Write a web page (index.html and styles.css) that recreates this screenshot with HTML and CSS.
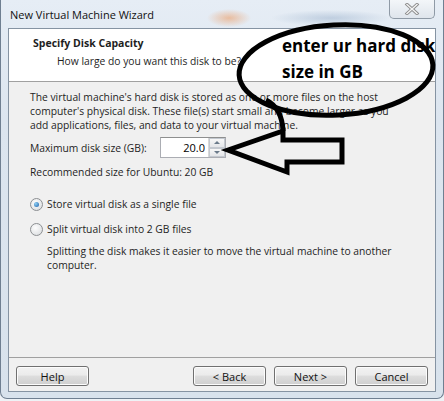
FILE: index.html
```html
<!DOCTYPE html>
<html lang="en">
<head>
  <meta charset="UTF-8" />
  <title>New Virtual Machine Wizard</title>
  <link rel="stylesheet" href="styles.css">
</head>
<body>
  <div class="window">
    <div class="titlebar">
      <span class="title">New Virtual Machine Wizard</span>
      <button class="close" aria-label="Close">
        <svg width="16" height="12" viewBox="0 0 16 12">
          <path d="M3 1.5 L13 10.5 M13 1.5 L3 10.5" stroke="#8a8a8a" stroke-width="3.2" stroke-linecap="square"/>
          <path d="M3 1.5 L13 10.5 M13 1.5 L3 10.5" stroke="#f4f4f4" stroke-width="1.4" stroke-linecap="square"/>
        </svg>
      </button>
    </div>

    <div class="client">
      <div class="header">
        <h3>Specify Disk Capacity</h3>
        <p>How large do you want this disk to be?</p>
      </div>

      <div class="content">
        <p class="intro">The virtual machine's hard disk is stored as one or more files on the host computer's physical disk. These file(s) start small and become larger as you add applications, files, and data to your virtual machine.</p>

        <div class="size-row">
          <label for="size">Maximum disk size (GB):</label>
          <div class="spin">
            <input type="text" id="size" value="20.0" />
            <div class="spin-btns">
              <span class="up"></span>
              <span class="down"></span>
            </div>
          </div>
        </div>

        <p class="recommended">Recommended size for Ubuntu: 20 GB</p>

        <div class="radio first checked"><span class="dot"></span>Store virtual disk as a single file</div>
        <div class="radio"><span class="dot"></span>Split virtual disk into 2 GB files</div>
        <p class="hint">Splitting the disk makes it easier to move the virtual machine to another computer.</p>
      </div>

      <div class="footer">
        <button class="btn">Help</button>
        <div class="nav">
          <button class="btn">&lt; Back</button>
          <button class="btn">Next &gt;</button>
          <button class="btn">Cancel</button>
        </div>
      </div>
    </div>
  </div>

  <!-- hand drawn note on top of the screenshot -->
  <svg class="scribble" width="444" height="401" viewBox="0 0 444 401">
    <ellipse cx="336" cy="70" rx="97" ry="45" transform="rotate(-3 336 70)" fill="none" stroke="#000" stroke-width="5"/>
    <path d="M266 100 Q282 108 283 131" fill="none" stroke="#000" stroke-width="5"/>
    <path d="M228 150 L283 131 L283 140 L342 140 L342 162 L287 162 L287 172 Z" fill="none" stroke="#000" stroke-width="5" stroke-linejoin="miter"/>
  </svg>
  <div class="note">enter ur hard disk<br>size in GB</div>
</body>
</html>
```

FILE: styles.css
```css
html, body { margin: 0; padding: 0; }
body { width: 444px; height: 401px; overflow: hidden; background: #eef2f6; font-family: "Open Sans", "Liberation Sans", sans-serif; font-size: 10.3px; color: #1e1e1e; position: relative; }

.window { width: 444px; height: 399px; box-sizing: border-box; padding: 0 7px 6px 7px; display: flex; flex-direction: column;
  border: 1px solid #6f7f91; border-top: none; border-radius: 0 0 7px 7px;
  background:
    radial-gradient(ellipse 22px 9px at 228px 18px, rgba(236,150,90,0.55), rgba(236,150,90,0) 100%),
    radial-gradient(ellipse 60px 8px at 330px 18px, rgba(120,150,185,0.35), rgba(120,150,185,0) 100%),
    linear-gradient(#e6edf5, #dce5ef 30%, #d8e2ec); }

.titlebar { height: 28px; display: flex; justify-content: space-between; align-items: flex-start; }
.title { margin: 7px 0 0 2px; font-size: 11px; color: #111; }
.close { width: 46px; height: 19px; margin-right: 1px; padding: 0; display: flex; align-items: center; justify-content: center;
  border: 1px solid #8f9aa6; border-top: none; border-radius: 0 0 5px 5px; background: linear-gradient(#f3f6f9, #dfe5ec); }

.client { flex: 1; display: flex; flex-direction: column; border: 1px solid #8593a2; background: #f0f0f0; }

.header { height: 53px; box-sizing: border-box; background: #fff; border-bottom: 1px solid #a0a0a0; padding: 7px 0 0 24px; }
.header h3 { margin: 0; font-size: 10.5px; font-weight: bold; line-height: 15px; }
.header p { margin: 3px 0 0 24px; line-height: 15px; }

.content { flex: 1; padding: 8px 20px 0 21px; }
.content p { margin: 0; line-height: 14px; }
.content .intro { width: 364px; }

.size-row { display: flex; align-items: center; margin-top: 5px; }
.size-row label { width: 130px; }
.spin { display: flex; border: 1px solid #abadb3; border-top-color: #8e8f8f; background: #fff; height: 19px; }
.spin input { width: 44px; border: none; padding: 0 3px 0 0; margin: 0; text-align: right; font: inherit; font-size: 11px; color: #000; background: #fff; outline: none; }
.spin-btns { width: 16px; display: flex; flex-direction: column; border-left: 1px solid #d8d8d8; }
.spin-btns span { flex: 1; border: 1px solid #c3c8cf; background: linear-gradient(#f7f7f7, #e4e6e9); display: flex; align-items: center; justify-content: center; }
.spin-btns .up::after { content: ""; border: 3px solid transparent; border-bottom: 3px solid #6a7a8a; border-top: none; }
.spin-btns .down::after { content: ""; border: 3px solid transparent; border-top: 3px solid #6a7a8a; border-bottom: none; }

.content .recommended { margin-top: 7px; }

.radio { display: flex; align-items: center; line-height: 14px; }
.radio.first { margin-top: 18px; }
.radio + .radio { margin-top: 11px; }
.dot { width: 11px; height: 11px; border: 1px solid #8c8f92; border-radius: 50%; margin-right: 4px; background: radial-gradient(circle at 40% 35%, #fdfdfd, #d6d9dc); display: flex; align-items: center; justify-content: center; }
.radio.checked .dot::after { content: ""; width: 5px; height: 5px; border-radius: 50%; background: radial-gradient(circle at 35% 35%, #8fd0f4, #1a5ea8); }

.content .hint { margin: 8px 0 0 17px; width: 360px; }

.footer { height: 34px; box-sizing: border-box; border-top: 1px solid #a0a0a0; padding: 8px 7px 0 7px; display: flex; justify-content: space-between; align-items: flex-start; }
.nav { display: flex; gap: 8px; }
.btn { width: 73px; height: 20px; padding: 0; font: inherit; font-size: 11px; color: #111; border: 1px solid #707070; border-radius: 3px;
  background: linear-gradient(#f2f2f2 0%, #ebebeb 45%, #dddddd 50%, #cfcfcf 100%); box-shadow: inset 0 0 0 1px #fcfcfc; }

.scribble { position: absolute; left: 0; top: 0; pointer-events: none; }
.note { position: absolute; left: 282px; top: 33px; font-family: "Open Sans", sans-serif; font-weight: bold; font-size: 17px; line-height: 26px; color: #000; white-space: nowrap; }
```
